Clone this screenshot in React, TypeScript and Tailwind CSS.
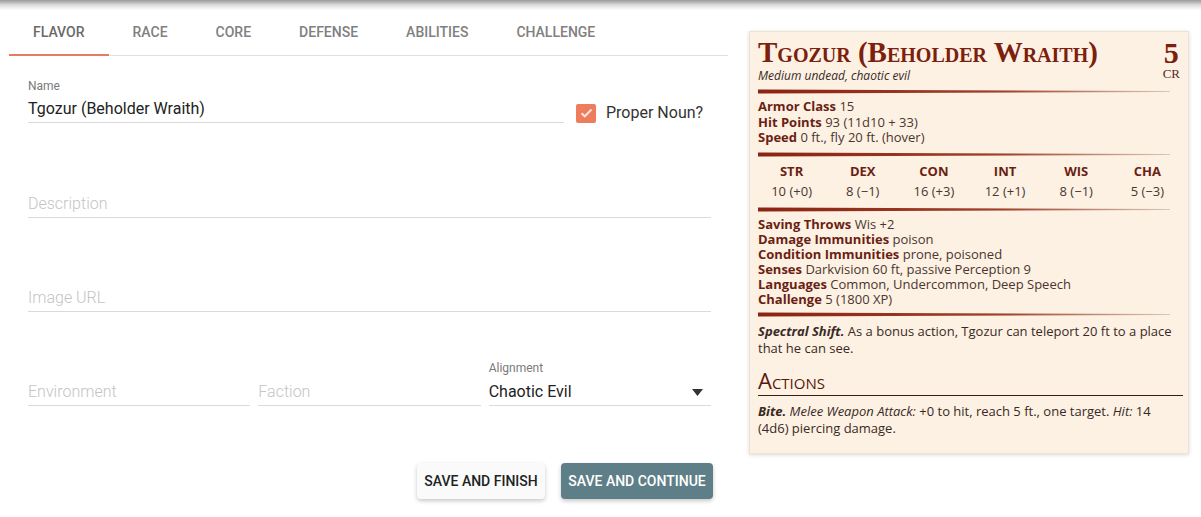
import React from "react";

const Rule = () => (
  <svg width="412" height="5" viewBox="0 0 412 5" className="block">
    <defs>
      <linearGradient id="rg" x1="0" x2="1" y1="0" y2="0">
        <stop offset="0" stopColor="#8a2413" />
        <stop offset="0.6" stopColor="#a0412c" />
        <stop offset="1" stopColor="#d8c8bb" />
      </linearGradient>
    </defs>
    <polygon points="0,0.5 412,2 412,3 0,4.5" fill="url(#rg)" />
  </svg>
);

const tabs = ["FLAVOR", "RACE", "CORE", "DEFENSE", "ABILITIES", "CHALLENGE"];

function Prop({ label, value }: { label: string; value: string }) {
  return (
    <div>
      <span className="font-bold text-[#6a1f14]">{label}</span>{" "}
      <span className="text-[#4a3530]">{value}</span>
    </div>
  );
}

export default function App() {
  const stats = [
    ["STR", "10 (+0)"],
    ["DEX", "8 (\u22121)"],
    ["CON", "16 (+3)"],
    ["INT", "12 (+1)"],
    ["WIS", "8 (\u22121)"],
    ["CHA", "5 (\u22123)"],
  ];
  return (
    <div className="relative w-[1201px] h-[517px] bg-white overflow-hidden" style={{ fontFamily: "Roboto, sans-serif" }}>
      <div className="absolute left-0 top-0 w-full h-[10px] bg-gradient-to-b from-[#9a9a9a] via-[#dcdcdc] to-transparent z-10" />
      <div className="flex">
        {/* Left column */}
        <div className="ml-[9px] w-[719px] pt-[8px]">
          <div className="flex h-[48px] border-b border-[#e0e0e0]">
            {tabs.map((t, i) => (
              <div
                key={t}
                className={
                  "relative flex items-center justify-center px-[24px] pt-[2px] text-[14px] font-medium " +
                  (i === 0 ? "text-[#6a6a6a]" : "text-[#808080]")
                }
              >
                {t}
                {i === 0 && <div className="absolute left-0 right-0 bottom-[-1px] h-[2px] bg-[#e27d64]" />}
              </div>
            ))}
          </div>

          <div className="pl-[19px] pr-[17px]">
            {/* Name row */}
            <div className="flex items-end mt-[23px]">
              <div className="w-[536px]">
                <div className="text-[12px] leading-[14px] text-[#7a7a7a]">Name</div>
                <div className="mt-[2px] h-[28px] border-b border-[#dadada] text-[16px] leading-[27px] text-[#222]">
                  Tgozur (Beholder Wraith)
                </div>
              </div>
              <div className="flex items-center ml-[12px] h-[20px]">
                <div className="w-[20px] h-[19px] rounded-[2px] bg-[#ee7d5e] flex items-center justify-center">
                  <svg width="13" height="10" viewBox="0 0 13 10">
                    <path d="M1.5 5.2 L4.8 8.3 L11.5 1.5" fill="none" stroke="#fde6dc" strokeWidth="2" />
                  </svg>
                </div>
                <span className="ml-[10px] text-[16px] text-[#333]">Proper Noun?</span>
              </div>
            </div>

            <div className="mt-[67px] h-[28px] border-b border-[#dadada] text-[16px] leading-[27px] text-[#c4c4c4] font-light">
              Description
            </div>
            <div className="mt-[66px] h-[28px] border-b border-[#dadada] text-[16px] leading-[27px] text-[#c4c4c4] font-light">
              Image URL
            </div>

            <div className="grid grid-cols-3 gap-2 items-end mt-[49px]">
              <div className="h-[28px] border-b border-[#dadada] text-[16px] leading-[27px] text-[#c4c4c4] font-light">
                Environment
              </div>
              <div className="h-[28px] border-b border-[#dadada] text-[16px] leading-[27px] text-[#c4c4c4] font-light">
                Faction
              </div>
              <div>
                <div className="text-[12px] leading-[14px] text-[#7a7a7a]">Alignment</div>
                <div className="mt-[3px] h-[28px] border-b border-[#dadada] flex items-center justify-between text-[16px] text-[#222]">
                  <span className="leading-[27px]">Chaotic Evil</span>
                  <svg width="11" height="7" viewBox="0 0 11 7" className="mr-[8px] mt-[2px]">
                    <polygon points="0,0 11,0 5.5,7" fill="#333" />
                  </svg>
                </div>
              </div>
            </div>

            <div className="flex justify-end gap-4 mt-[57px] -mr-[2px]">
              <button className="h-[36px] w-[128px] rounded-[4px] bg-[#fafafa] text-[14px] font-medium text-[#222] shadow-[0_2px_4px_rgba(0,0,0,0.22)]">
                SAVE AND FINISH
              </button>
              <button className="h-[36px] w-[152px] rounded-[4px] bg-[#5f7f88] text-[14px] font-medium text-white shadow-[0_2px_4px_rgba(0,0,0,0.22)]">
                SAVE AND CONTINUE
              </button>
            </div>
          </div>
        </div>

        {/* Stat block */}
        <div
          className="ml-[21px] mt-[31px] w-[440px] h-[423px] bg-[#fdf1e3] border border-[#ece2d6] shadow-[0_1px_4px_rgba(0,0,0,0.15)] pl-[8px] pr-[6px] pt-[5px]"
          style={{ fontFamily: "'Open Sans', 'Noto Sans', sans-serif" }}
        >
          <div className="flex justify-between">
            <div>
              <div
                className="text-[29px] leading-[31px] font-bold text-[#7a200d] [font-variant:small-caps]"
                style={{ fontFamily: "'Liberation Serif', serif" }}
              >
                Tgozur (Beholder Wraith)
              </div>
              <div className="text-[12px] leading-[14px] italic text-[#3a2a25] mt-[1px]">Medium undead, chaotic evil</div>
            </div>
            <div className="flex flex-col items-center pr-[2px] pt-[2px]" style={{ fontFamily: "'Liberation Serif', serif" }}>
              <div className="text-[30px] leading-[28px] font-bold text-[#7a200d]">5</div>
              <div className="text-[13px] leading-[14px] text-[#5a2a22]">CR</div>
            </div>
          </div>
          <div className="mt-[6px]">
            <Rule />
          </div>
          <div className="mt-[5px] text-[13px] leading-[15.5px]">
            <Prop label="Armor Class" value="15" />
            <Prop label="Hit Points" value="93 (11d10 + 33)" />
            <Prop label="Speed" value="0 ft., fly 20 ft. (hover)" />
          </div>
          <div className="mt-[6px]">
            <Rule />
          </div>
          <div className="grid grid-cols-6 w-[427px] -ml-[2px] mt-[6px] text-[13px] leading-[17px] text-center">
            {stats.map(([k, v]) => (
              <div key={k}>
                <div className="font-bold text-[#6a1f14]">{k}</div>
                <div className="mt-[3px] text-[#4a3530]">{v}</div>
              </div>
            ))}
          </div>
          <div className="mt-[7px]">
            <Rule />
          </div>
          <div className="mt-[5px] text-[13px] leading-[15px]">
            <Prop label="Saving Throws" value="Wis +2" />
            <Prop label="Damage Immunities" value="poison" />
            <Prop label="Condition Immunities" value="prone, poisoned" />
            <Prop label="Senses" value="Darkvision 60 ft, passive Perception 9" />
            <Prop label="Languages" value="Common, Undercommon, Deep Speech" />
            <Prop label="Challenge" value="5 (1800 XP)" />
          </div>
          <div className="mt-[5px]">
            <Rule />
          </div>
          <div className="mt-[6px] text-[13px] leading-[17px] text-[#3a2a25] w-[425px]">
            <span className="font-bold italic">Spectral Shift.</span> As a bonus action, Tgozur can teleport 20 ft to a
            place that he can see.
          </div>
          <div className="mt-[11px] pb-[3px] w-[425px] border-b border-[#3a1a12] text-[22px] leading-[24px] text-[#58180d] [font-variant:small-caps]">
            Actions
          </div>
          <div className="mt-[7px] text-[13px] leading-[17px] text-[#3a2a25] w-[425px]">
            <span className="font-bold italic">Bite.</span> <span className="italic">Melee Weapon Attack:</span> +0 to
            hit, reach 5 ft., one target. <span className="italic">Hit:</span> 14 (4d6) piercing damage.
          </div>
        </div>
      </div>
    </div>
  );
}
